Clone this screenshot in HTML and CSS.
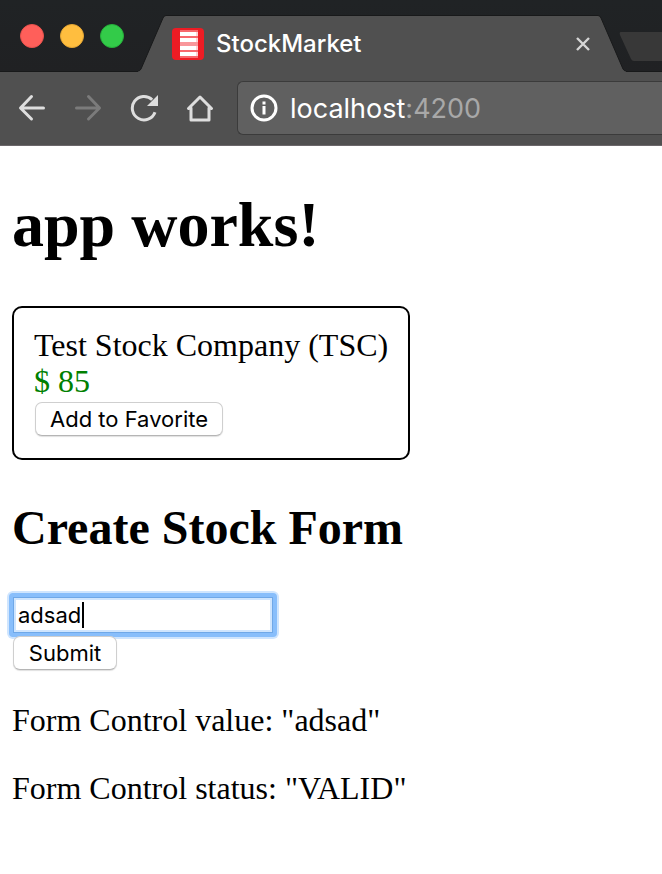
FILE: index.html
```html
<!DOCTYPE html>
<html lang="en">
<head>
<meta charset="utf-8">
<meta name="viewport" content="width=device-width, initial-scale=1">
<title>StockMarket</title>
<link rel="stylesheet" href="styles.css">
</head>
<body>
<header class="browser">
  <div class="tab-strip">
    <div class="window-controls">
      <button class="light close" aria-label="Close window"></button>
      <button class="light minimize" aria-label="Minimize window"></button>
      <button class="light expand" aria-label="Expand window"></button>
    </div>
    <div class="tab">
      <svg class="tab-edge" width="28" height="57" viewBox="0 0 28 57" aria-hidden="true">
        <path d="M0 57V56Q2 56 3 54L25 3Q26 .5 28 .5V57Z" fill="#505050"/>
        <path d="M0 56Q2 56 3 54L25 3Q26 .5 28 .5" fill="none" stroke="#18191a"/>
      </svg>
      <div class="tab-body">
        <svg class="favicon" width="32" height="32" viewBox="0 0 32 32" aria-hidden="true">
          <rect width="32" height="32" rx="4" fill="#ed1c24"/>
          <path d="M8 2h18v28H8z" fill="#f7686d"/>
          <path d="M8 4h16v4H8zM8 10h16v4H8zM8 18h16v4H8zM8 24h16v4H8z" fill="#fff"/>
          <path d="M24 4h2v4h-2zM24 10h2v4h-2zM24 18h2v4h-2zM24 24h2v4h-2z" fill="#fcd0d2"/>
          <path d="M8 14h18v4H8z" fill="#f9979b"/>
        </svg>
        <span class="tab-title">StockMarket</span>
        <button class="tab-close" aria-label="Close tab">
          <svg width="14" height="14" viewBox="0 0 14 14"><path d="M1 1L13 13M13 1L1 13" stroke="#d5d5d5" stroke-width="2.4"/></svg>
        </button>
      </div>
      <svg class="tab-edge" width="28" height="57" viewBox="0 0 28 57" aria-hidden="true">
        <path d="M0 57V.5Q2 .5 3 3L25 54Q26 56 28 56V57Z" fill="#505050"/>
        <path d="M0 .5Q2 .5 3 3L25 54Q26 56 28 56" fill="none" stroke="#18191a"/>
      </svg>
    </div>
    <button class="new-tab" aria-label="New tab">
      <svg width="58" height="30" viewBox="0 0 58 30"><path d="M2 0H46L57 27Q58 29 56 29H15Q13 29 12 27L1 3Q0 0 2 0Z" fill="#383838"/></svg>
    </button>
  </div>
  <nav class="toolbar" aria-label="Browser">
    <button class="tool" aria-label="Back">
      <svg width="28" height="28" viewBox="0 0 28 28"><path d="M25.500 14H3M13.500 2.500L2.500 14L13.500 25" stroke="#dedede"/></svg>
    </button>
    <button class="tool" aria-label="Forward" disabled>
      <svg width="28" height="28" viewBox="0 0 28 28"><path d="M2.500 14H25M14.500 2.500L25.500 14L14.500 25" stroke="#7b7b7b"/></svg>
    </button>
    <button class="tool" aria-label="Reload">
      <svg width="28" height="28" viewBox="0 0 28 28"><path d="M25 18.200A11.700 11.700 0 1 1 22.200 5.800" stroke="#dedede" stroke-linecap="butt"/><path d="M28 1V12H17Z" fill="#dedede" stroke="none"/></svg>
    </button>
    <button class="tool" aria-label="Home">
      <svg width="28" height="28" viewBox="0 0 28 28"><path d="M2.500 14.500L14 3L25.500 14.500M5 14V26H23V14" stroke="#dedede"/></svg>
    </button>
    <div class="address">
      <svg width="28" height="28" viewBox="0 0 28 28" aria-hidden="true">
        <circle cx="14" cy="14" r="12" fill="none" stroke="#fff" stroke-width="3"/>
        <path d="M12.500 7.500h3v3h-3zM12.500 12h3v8.500h-3z" fill="#fff"/>
      </svg>
      <span class="url">localhost<span class="port">:4200</span></span>
    </div>
  </nav>
</header>
<main class="page">
  <h1>app works!</h1>
  <section class="stock">
    <div>Test Stock Company (TSC)</div>
    <div class="price">$ 85</div>
    <button class="push" type="button">Add to Favorite</button>
  </section>
  <h2>Create Stock Form</h2>
  <form>
    <div class="field">
      <input type="text" value="adsad" aria-label="Stock name">
      <span class="caret" aria-hidden="true"></span>
    </div>
    <button class="push" type="button">Submit</button>
  </form>
  <p>Form Control value: "adsad"</p>
  <p>Form Control status: "VALID"</p>
</main>
</body>
</html>
```

FILE: styles.css
```css
* { box-sizing: border-box; }

body {
  margin: 0;
  background: #fff;
  color: #000;
  font: 32px/36px "Liberation Serif", serif;
  overflow-x: hidden;
}

button {
  margin: 0;
  padding: 0;
  border: 0;
  background: none;
}

svg { display: block; flex: none; }

/* Browser chrome */
.browser {
  background: #505050;
  border-bottom: 1px solid #6b676a;
  font-family: Inter, sans-serif;
  overflow: hidden;
}

.tab-strip {
  display: flex;
  height: 72px;
  background: linear-gradient(#202325, #202123);
  box-shadow: inset 0 -1px #18191a;
}

.window-controls {
  display: flex;
  gap: 16px;
  padding: 24px 14px 0 20px;
}

.light {
  width: 24px;
  height: 24px;
  border-radius: 50%;
}

.close { background: #ff5f5a; border: 1px solid #e9524d; }
.minimize { background: #ffbe3f; border: 1px solid #e5a633; }
.expand { background: #33cb49; border: 1px solid #25b03a; }

.tab {
  display: flex;
  flex: 1;
  align-items: flex-end;
}

.tab-body {
  display: flex;
  flex: 1;
  align-items: center;
  height: 57px;
  padding: 0 8px 0 6px;
  border-top: 1px solid #18191a;
  background: #505050;
}

.tab-title {
  flex: 1;
  padding-left: 12px;
  color: #fff;
  font-size: 24px;
  font-weight: 500;
}

.new-tab {
  align-self: flex-start;
  width: 43px;
  margin: 32px 0 0 -7px;
}

.toolbar {
  display: flex;
  align-items: center;
  gap: 28px;
  height: 73px;
  padding: 0 0 2px 18px;
}

.tool svg {
  fill: none;
  stroke-width: 3;
  stroke-linecap: round;
  stroke-linejoin: round;
}

.address {
  display: flex;
  flex: 1;
  align-items: center;
  gap: 12px;
  height: 54px;
  margin-left: -5px;
  padding-left: 12px;
  border: 1px solid #3b3b3b;
  border-right: 0;
  border-radius: 6px 0 0 6px;
  background: #606060;
}

.url { padding-top: 2px; color: #fff; font-size: 27px; }
.port { color: #a8a8a8; }

/* Page */
.page { padding: 42px 12px; }

h1 {
  margin: 0 0 44px;
  font-size: 64px;
  line-height: 74px;
}

.stock {
  width: fit-content;
  padding: 19px 20px 20px;
  border: 2px solid #000;
  border-radius: 10px;
}

.stock .push { margin-top: 3px; }

.price { color: green; }

h2 {
  margin: 41px 0 42px;
  font-size: 48px;
  line-height: 54px;
}

.push {
  position: relative;
  display: block;
  min-width: 104px;
  height: 34px;
  margin: 2px 1px;
  padding: 0 14px;
  border: 1px solid #cfcfcf;
  border-bottom-color: #b5b5b5;
  border-radius: 7px;
  background: #fff;
  box-shadow: 0 1px 1px #e0e0e0;
  color: #000;
  font: 22px/32px Inter, sans-serif;
}

.field {
  position: relative;
  display: flex;
  align-items: center;
  width: 260px;
  height: 36px;
  margin: 0 1px 3px;
}

.field::before {
  content: "";
  position: absolute;
  inset: -4px;
  border-radius: 4px;
  background: #88befb;
  box-shadow: 0 0 0 2px #cfe5fe;
}

.field input {
  position: relative;
  width: 100%;
  height: 100%;
  padding: 0 4px;
  border: 1px solid #6fa8e8;
  border-radius: 0;
  outline: 0;
  background: #fff;
  box-shadow: inset 0 0 0 2px #cfe5fe;
  font: 22px/32px Inter, sans-serif;
}

.caret {
  position: absolute;
  left: 69px;
  width: 2px;
  height: 26px;
  background: #000;
}

p { margin: 32px 0 0; }
```
